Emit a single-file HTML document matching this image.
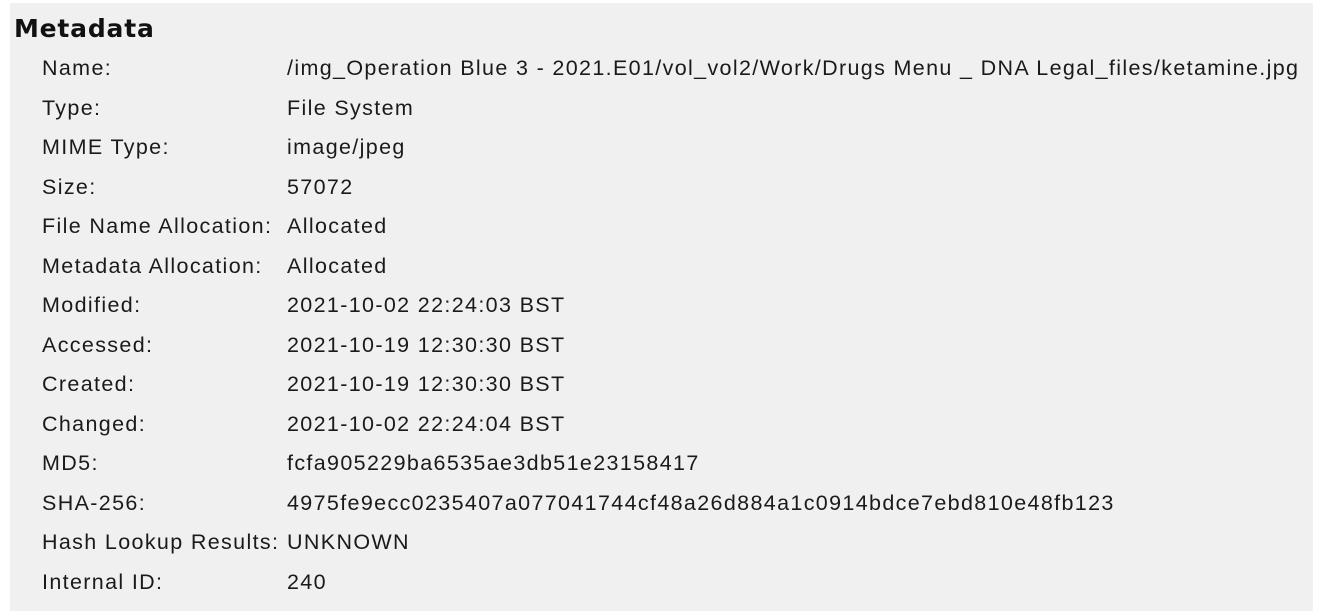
<!DOCTYPE html>
<html><head><style>
html,body{margin:0;padding:0;background:#fff;width:1320px;height:616px;overflow:hidden}
#p{position:absolute;left:10px;top:3px;width:1303px;height:608px;background:#f0f0f0}
h1{position:absolute;left:4px;top:10px;margin:0;font:bold 25px/32px "DejaVu Sans","Liberation Sans",sans-serif;color:#111;letter-spacing:0.8px}
#t{position:absolute;left:32px;top:46px;font:21.5px/39.5px "Liberation Sans",sans-serif;color:#1a1a1a;letter-spacing:1.35px}
.r{height:39.5px;white-space:nowrap;position:relative}
.l{position:absolute;left:0}
.v{position:absolute;left:245px}
</style></head><body><div id="p">
<h1>Metadata</h1>
<div id="t">
<div class="r"><span class="l">Name:</span><span class="v">/img_Operation Blue 3 - 2021.E01/vol_vol2/Work/Drugs Menu _ DNA Legal_files/ketamine.jpg</span></div>
<div class="r"><span class="l">Type:</span><span class="v">File System</span></div>
<div class="r"><span class="l">MIME Type:</span><span class="v">image/jpeg</span></div>
<div class="r"><span class="l">Size:</span><span class="v">57072</span></div>
<div class="r"><span class="l">File Name Allocation:</span><span class="v">Allocated</span></div>
<div class="r"><span class="l">Metadata Allocation:</span><span class="v">Allocated</span></div>
<div class="r"><span class="l">Modified:</span><span class="v">2021-10-02 22:24:03 BST</span></div>
<div class="r"><span class="l">Accessed:</span><span class="v">2021-10-19 12:30:30 BST</span></div>
<div class="r"><span class="l">Created:</span><span class="v">2021-10-19 12:30:30 BST</span></div>
<div class="r"><span class="l">Changed:</span><span class="v">2021-10-02 22:24:04 BST</span></div>
<div class="r"><span class="l">MD5:</span><span class="v">fcfa905229ba6535ae3db51e23158417</span></div>
<div class="r"><span class="l">SHA-256:</span><span class="v">4975fe9ecc0235407a077041744cf48a26d884a1c0914bdce7ebd810e48fb123</span></div>
<div class="r"><span class="l">Hash Lookup Results:</span><span class="v">UNKNOWN</span></div>
<div class="r"><span class="l">Internal ID:</span><span class="v">240</span></div>
</div></div></body></html>
